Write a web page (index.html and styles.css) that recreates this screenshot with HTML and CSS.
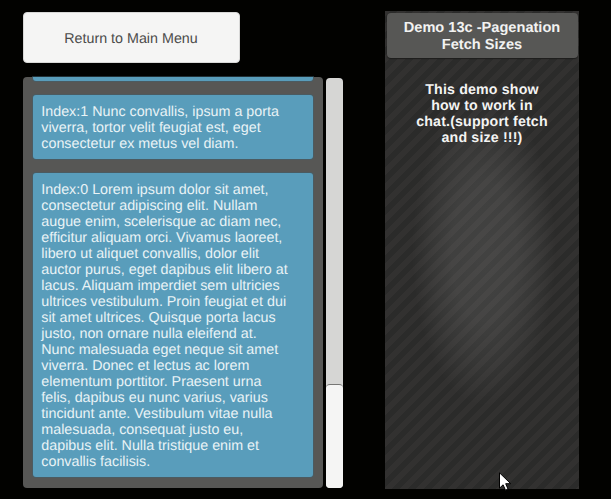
FILE: index.html
```html
<!DOCTYPE html>
<html lang="en">
<head>
<meta charset="utf-8">
<title>Demo 13c</title>
<link rel="stylesheet" href="styles.css">
</head>
<body>
<main class="scene">
  <section class="chat">
    <button class="return">Return to Main Menu</button>
    <div class="scroll">
      <div class="list">
        <div class="message clipped"></div>
        <p class="message">Index:1 Nunc convallis, ipsum a porta<br>viverra, tortor velit feugiat est, eget<br>consectetur ex metus vel diam.</p>
        <p class="message">Index:0 Lorem ipsum dolor sit amet,<br>consectetur adipiscing elit. Nullam<br>augue enim, scelerisque ac diam nec,<br>efficitur aliquam orci. Vivamus laoreet,<br>libero ut aliquet convallis, dolor elit<br>auctor purus, eget dapibus elit libero at<br>lacus. Aliquam imperdiet sem ultricies<br>ultrices vestibulum. Proin feugiat et dui<br>sit amet ultrices. Quisque porta lacus<br>justo, non ornare nulla eleifend at.<br>Nunc malesuada eget neque sit amet<br>viverra. Donec et lectus ac lorem<br>elementum porttitor. Praesent urna<br>felis, dapibus eu nunc varius, varius<br>tincidunt ante. Vestibulum vitae nulla<br>malesuada, consequat justo eu,<br>dapibus elit. Nulla tristique enim et<br>convallis facilisis.</p>
      </div>
      <div class="track"><div class="thumb"></div></div>
    </div>
  </section>
  <aside class="info">
    <h1 class="title">Demo 13c -Pagenation<br>Fetch Sizes</h1>
    <p class="description">This demo show<br>how to work in<br>chat.(support fetch<br>and size !!!)</p>
  </aside>
</main>
<svg class="cursor" width="14" height="20" viewBox="0 0 14 20"><path d="M.5 .8V16.2L4.1 12.8L6.5 18.2L9 17L6.7 11.7H11.7Z" fill="#fff" stroke="#000"/></svg>
</body>
</html>
```
FILE: styles.css
```css
* { box-sizing: border-box; }
body {
  margin: 0;
  background: #020200;
  font-family: "Liberation Sans", Arial, sans-serif;
  text-rendering: geometricPrecision;
  overflow: hidden;
}
.scene {
  display: flex;
  gap: 42px;
  width: 611px;
  height: 499px;
  padding: 11px 0 0 23px;
}
.chat { width: 320px; padding-top: 1px; }
.return {
  display: block;
  width: 217px;
  height: 51px;
  padding: 2px 1px 0 0;
  border: 1px solid #d8d8d7;
  border-radius: 4px;
  background: #f5f5f4;
  color: #4b4b4a;
  font: 14.3px/16px "Liberation Sans", Arial, sans-serif;
  text-rendering: geometricPrecision;
}
.scroll {
  display: flex;
  gap: 3px;
  height: 411px;
  margin-top: 14px;
}
.list {
  width: 300px;
  padding: 0 10px;
  border-radius: 4px;
  background: #575755;
}
.message {
  width: 280px;
  margin: 0 0 14px;
  padding: 9px 8px 7px 8.3px;
  border-radius: 3px;
  background: #599dbb;
  box-shadow: 0 0 0 1px #3f606d80;
  color: #e9f3f6;
  font-size: 14.3px;
  line-height: 16px;
  white-space: nowrap;
}
.clipped {
  height: 4px;
  padding: 0;
  border-radius: 0 0 3px 3px;
}
.track {
  display: flex;
  align-items: flex-end;
  width: 17px;
  margin-top: 1px;
  border-radius: 4px;
  background: #d6d6d4;
}
.thumb {
  width: 17px;
  height: 104px;
  border-top: 1px solid #777775;
  border-radius: 4px;
  background: #f5f5f4;
}
.info {
  width: 194px;
  height: 478px;
  padding: 2px 1px 0 2px;
  background:
    radial-gradient(ellipse 72px 155px at 99px 240px, #ffffff1c, #ffffff19 45%, #ffffff0e 72%, transparent),
    repeating-linear-gradient(135deg, #323130 0 3.54px, #2b2b2a 3.54px 9.19px, #323130 9.19px 11.31px);
}
.title {
  width: 191px;
  height: 45px;
  margin: 0;
  padding: 7px 1px 0 0;
  border-radius: 4px;
  background: #575755;
  box-shadow: 0 1px 1px #1d1d1c;
  color: #f2f2f1;
  font-size: 14.6px;
  line-height: 17px;
  text-align: center;
}
.description {
  margin: 24px 1px 0 0;
  color: #f4f4f3;
  font-size: 14.2px;
  font-weight: bold;
  line-height: 16px;
  letter-spacing: .16px;
  text-align: center;
}
.cursor { position: absolute; left: 499px; top: 472px; }
```
